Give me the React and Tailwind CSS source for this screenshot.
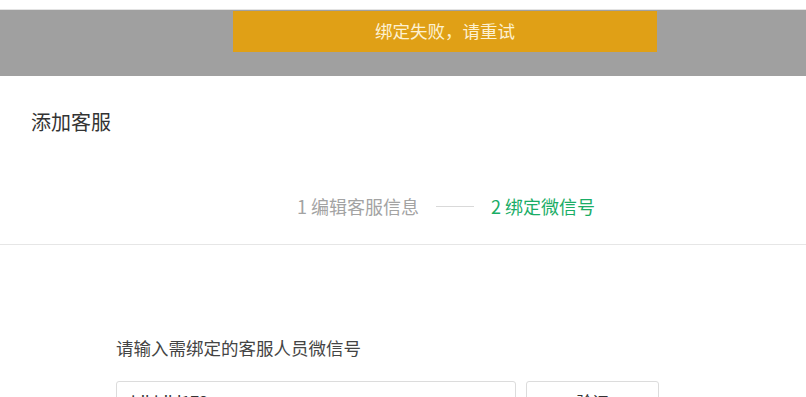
export default function App() {
  const font = { fontFamily: '"Noto Sans CJK SC", "Noto Sans", sans-serif' };
  return (
    <div className="w-[806px] h-[397px] overflow-hidden bg-white" style={font}>
      <div className="h-[10px] bg-white border-b border-[#e3e3e3]" />
      <div className="h-[66px] bg-[#a0a0a0] flex">
        <div className="ml-[233px] w-[424px] h-[41px] mt-px bg-[#e0a016] flex items-center justify-center text-[17.5px] text-[#fdf1d2]">
          绑定失败，请重试
        </div>
      </div>

      <div className="pl-[31px] pt-[31px] h-[94px] text-[20px] leading-[30px] text-[#333]">添加客服</div>

      <div className="h-[75px] border-b border-[#e6e6e6] flex items-start pl-[297px] pt-[23px]">
        <div className="flex items-center gap-[17px] text-[18px] leading-[26px]">
          <span className="text-[#a3a3a3]">1 编辑客服信息</span>
          <span className="w-[38px] h-px bg-[#d9d9d9]" />
          <span className="text-[#1aad66]">2 绑定微信号</span>
        </div>
      </div>

      <div className="pl-[116px] pt-[90px]">
        <div className="text-[17.5px] leading-[26px] text-[#444]">请输入需绑定的客服人员微信号</div>
        <div className="flex gap-[10px] mt-[20px]">
          <div className="w-[400px] h-[40px] border border-[#dcdcdc] rounded-[3px] px-[14px] text-[16px] leading-[38px] text-[#333]">
            hjkhjkl173
          </div>
          <div className="w-[133px] h-[40px] border border-[#dcdcdc] rounded-[3px] flex justify-center text-[16px] leading-[38px] text-[#333]">
            验证
          </div>
        </div>
      </div>
    </div>
  );
}
